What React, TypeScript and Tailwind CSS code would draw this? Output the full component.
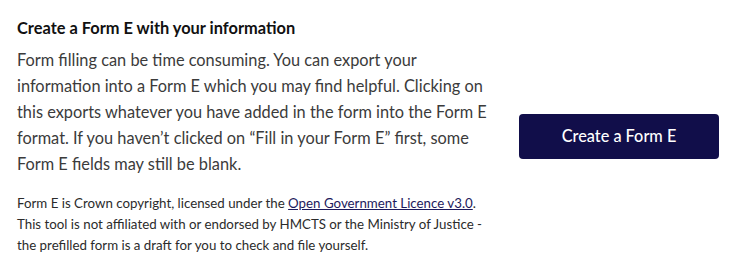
export default function App() {
  return (
    <div className="w-[737px] h-[262px] bg-white flex items-start" style={{ fontFamily: "Lato, 'Noto Sans', sans-serif" }}>
      <div className="pl-[17px] pt-[17px] w-[487px]">
        <h2 className="text-[16.4px] leading-[22px] font-bold text-[#111111]">Create a Form E with your information</h2>
        <p className="mt-[8px] text-[16.35px] leading-[26px] text-[#3b3b3b]">
          Form filling can be time consuming. You can export your information into a Form E which you may find helpful. Clicking on this exports whatever you have added in the form into the Form E format. If you haven’t clicked on “Fill in your Form E” first, some Form E fields may still be blank.
        </p>
        <p className="mt-[16px] text-[13.3px] leading-[21px] text-[#2b2b2b]">
          Form E is Crown copyright, licensed under the{" "}
          <a href="#" className="underline text-[#1d1a5c]">Open Government Licence v3.0</a>.
          This tool is not affiliated with or endorsed by HMCTS or the Ministry of Justice - the prefilled form is a draft for you to check and file yourself.
        </p>
      </div>
      <div className="pl-[32px] pt-[114px]">
        <button className="w-[200px] h-[45px] rounded-[4px] bg-[#110e4a] text-white text-[16.3px] font-medium">Create a Form E</button>
      </div>
    </div>
  );
}
